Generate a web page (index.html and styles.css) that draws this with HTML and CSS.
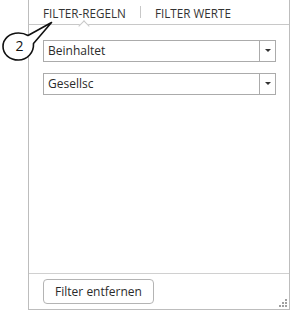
FILE: index.html
```html
<!DOCTYPE html>
<html lang="de">
<head>
    <meta charset="UTF-8">
    <title>Filter</title>
    <link rel="stylesheet" href="styles.css">
</head>
<body>
    <div class="page">
        <div class="panel">
            <div class="tabs">
                <div class="tab active">FILTER-REGELN</div>
                <div class="tab-sep"></div>
                <div class="tab">FILTER WERTE</div>
            </div>

            <div class="body">
                <div class="select">
                    <span class="value">Beinhaltet</span>
                    <span class="arrow"></span>
                </div>
                <div class="select">
                    <span class="value">Gesellsc</span>
                    <span class="arrow"></span>
                </div>
            </div>

            <div class="footer">
                <button class="btn">Filter entfernen</button>
                <svg class="grip" width="9" height="9" viewBox="0 0 9 9">
                    <rect x="6" y="0" width="2" height="2"/>
                    <rect x="3" y="3" width="2" height="2"/>
                    <rect x="6" y="3" width="2" height="2"/>
                    <rect x="0" y="6" width="2" height="2"/>
                    <rect x="3" y="6" width="2" height="2"/>
                    <rect x="6" y="6" width="2" height="2"/>
                </svg>
            </div>
        </div>

        <!-- numbered callout -->
        <svg class="callout" width="60" height="70" viewBox="0 0 60 70">
            <path d="M 28 35.5 L 51.5 22.5 L 33.5 43.5 C 34 53 27 60 18.5 60 C 9.5 60 3 54 3 46.5 C 3 39 9.5 33 18.5 33 C 22 33 25.5 34 28 35.5 Z"
                  fill="#fff" stroke="#111" stroke-width="1.6" stroke-linejoin="round"/>
            <text x="19.5" y="50.5" text-anchor="middle" class="callout-num">2</text>
        </svg>
    </div>
</body>
</html>
```

FILE: styles.css
```css
* {
    box-sizing: border-box;
}
body {
    margin: 0;
    font-family: "Open Sans", "Noto Sans", sans-serif;
    background: #fff;
}
.page {
    position: relative;
    width: 290px;
    height: 310px;
    padding-left: 28px;
}
.panel {
    width: 262px;
    height: 310px;
    border: 1px solid #bdbdbd;
    border-top: none;
    display: flex;
    flex-direction: column;
}
.tabs {
    position: relative;
    height: 25px;
    border-bottom: 1px solid #c8c8c8;
    display: flex;
    align-items: center;
    padding-left: 14px;
    font-size: 11.7px;
    color: #333;
}
.tab {
    line-height: 16px;
    padding-top: 1px;
}
.tab.active {
    position: relative;
}
.tab.active::after {
    content: "";
    position: absolute;
    left: 37px;
    bottom: -9px;
    width: 7px;
    height: 7px;
    background: #fff;
    border-left: 1px solid #c8c8c8;
    border-top: 1px solid #c8c8c8;
    transform: rotate(45deg);
}
.tab-sep {
    width: 1px;
    height: 12px;
    background: #c8c8c8;
    margin: 0 14px;
}
.body {
    flex: 1;
    padding: 15px 13px 0 14px;
    display: flex;
    flex-direction: column;
    gap: 11px;
}
.select {
    height: 22px;
    border: 1px solid #ababab;
    display: flex;
    font-size: 12px;
    color: #2b2b2b;
}
.select .value {
    flex: 1;
    padding-left: 4px;
    line-height: 20px;
}
.select .arrow {
    width: 16px;
    border-left: 1px solid #ababab;
    position: relative;
}
.select .arrow::after {
    content: "";
    position: absolute;
    left: 5px;
    top: 8px;
    border-left: 3px solid transparent;
    border-right: 3px solid transparent;
    border-top: 3px solid #333;
}
.footer {
    position: relative;
    height: 36px;
    border-top: 1px solid #d0d0d0;
    padding: 5px 0 0 14px;
}
.btn {
    width: 111px;
    height: 25px;
    border: 1px solid #b4b4b4;
    border-radius: 4px;
    background: #fff;
    font-family: "Open Sans", "Noto Sans", sans-serif;
    font-size: 12px;
    color: #2b2b2b;
    padding: 0;
}
.grip {
    position: absolute;
    right: 1px;
    bottom: 1px;
    fill: #a0a0a0;
}
.callout {
    position: absolute;
    left: 0;
    top: 0;
}
.callout-num {
    font-family: "Open Sans", "Noto Sans", sans-serif;
    font-size: 14px;
    fill: #111;
}
```
